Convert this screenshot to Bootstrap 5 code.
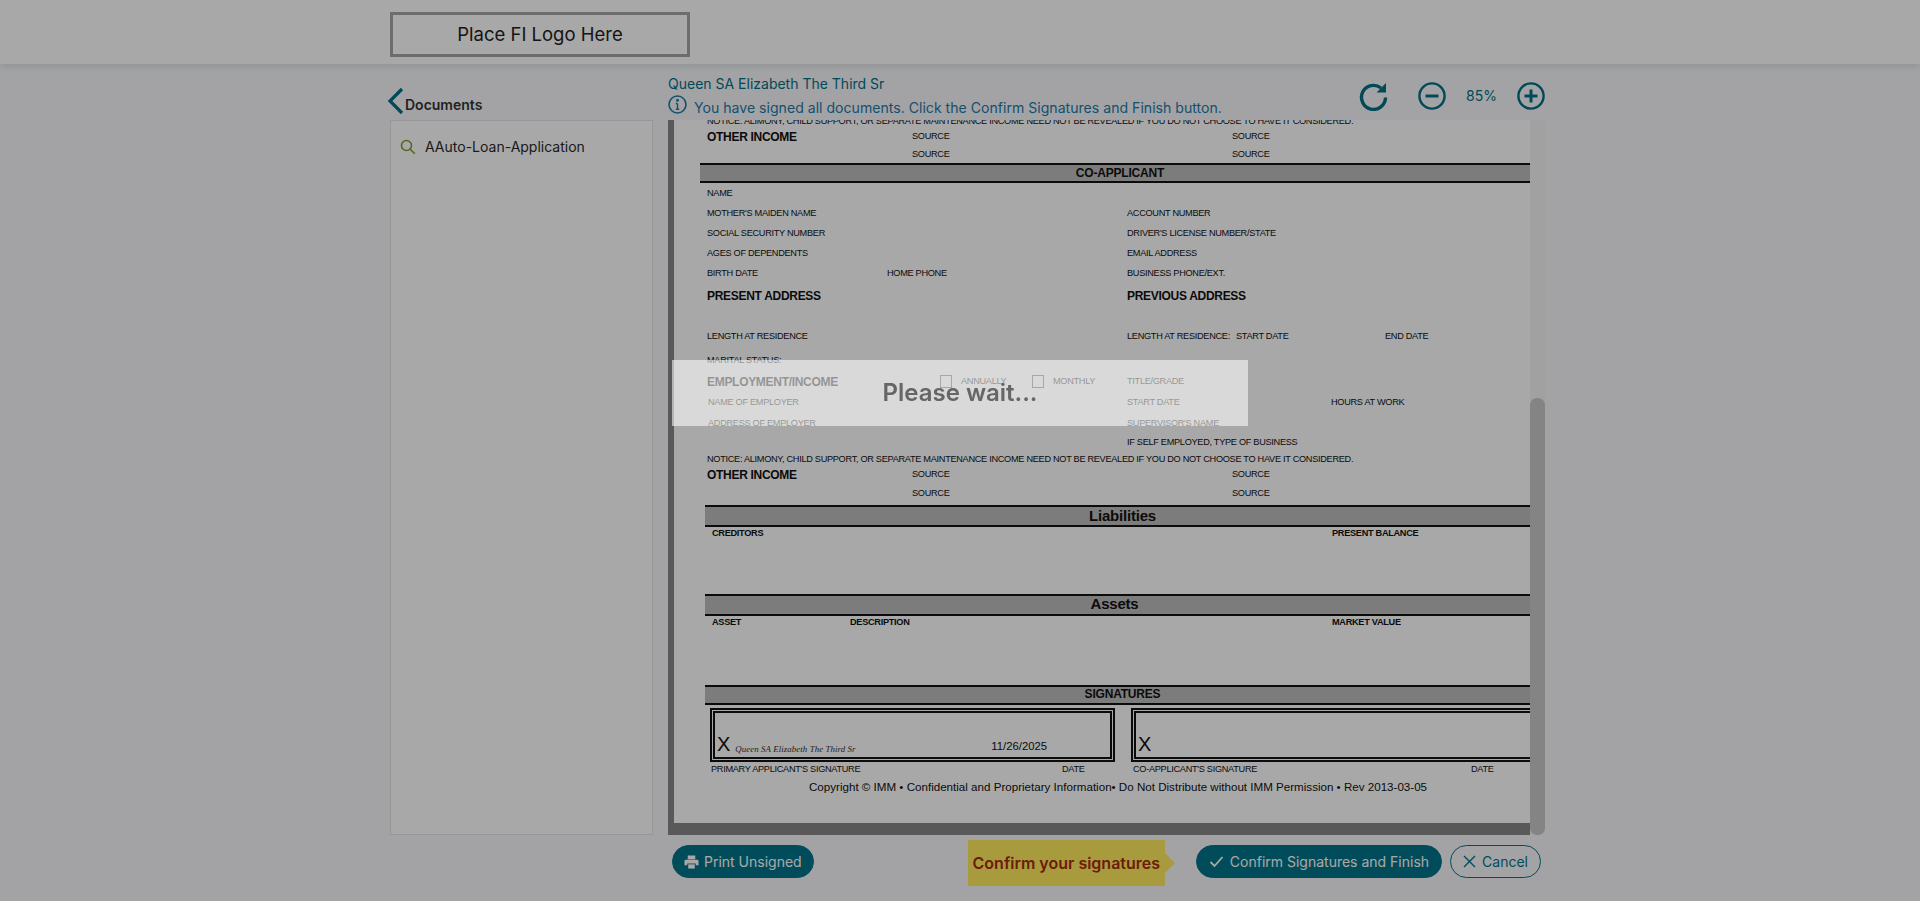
<!DOCTYPE html>
<html lang="en">
<head>
  <meta charset="UTF-8">
  <title>Sign Documents</title>
  <link href="https://cdn.jsdelivr.net/npm/bootstrap@5.3.0/dist/css/bootstrap.min.css" rel="stylesheet">
  <style>
    html, body { height: 100%; overflow: hidden; }
    body { background: #f7f8fb; font-family: Inter, "Liberation Sans", sans-serif; color: #222; }

    /* header */
    .top-bar { height: 64px; background: #fff; padding: 12px 0 0 390px; box-shadow: 0 2px 8px rgba(0,0,0,.12); }
    .logo-box { width: 300px; height: 45px; border: 3px solid #a6a6a6; font-size: 18.5px; font-weight: 400; color: #222; }

    /* main grid */
    .sign-grid { display: grid; grid-template-columns: 263px 877px; grid-template-rows: 56px 715px auto; column-gap: 15px; padding-left: 390px; }
    .docs-title { font-size: 14px; font-weight: 600; color: #333; padding-bottom: 5px; }
    .docs-title svg { margin-left: -5px; margin-right: -2px; }
    .docs-list { background: #fff; border: 1px solid #e4e4e4; padding: 15px 9px; }
    .docs-item { font-size: 14px; color: #2a2a2a; gap: 9px; }
    .who { font-size: 14px; color: #036f85; line-height: 18px; padding-top: 11px; }
    .sign-msg { font-size: 14.1px; color: #1f7aa8; line-height: 20px; gap: 7px; margin-top: 2px; }
    .sign-msg span { padding-top: 3px; }
    .zoom-tools { padding-top: 18px; gap: 30px; }
    .zoom-pct { font-size: 14px; color: #036f85; width: 41px; text-align: center; margin: 0 -15px; }
    .teal-ic { color: #036f85; }

    /* pdf viewer */
    .viewer { height: 715px; overflow: hidden; }
    .doc-pane { flex: 1 1 auto; min-width: 0; overflow: hidden; justify-content: flex-end; }
    .doc-page { flex-shrink: 0; background: #888; padding: 0 0 12px 6px; }
    .doc-paper { background: #fff; padding-bottom: 27px; font-family: "Liberation Sans", Arial, sans-serif; font-size: 9.2px; letter-spacing: -.3px; color: #111; white-space: nowrap; }
    .doc-row { display: flex; align-items: center; padding-left: 33px; padding-top: 1px; }
    .rh-12 { height: 12px; } .rh-13 { height: 13px; } .rh-15 { height: 15px; } .rh-17 { height: 17px; }
    .rh-18 { height: 18px; } .rh-20 { height: 20px; } .rh-21 { height: 21px; }
    .rh-22 { height: 22px; } .rh-24 { height: 24px; } .gap-4px { height: 4px; } .gap-19 { height: 19px; }
    .gap-55 { height: 55px; } .gap-57 { height: 57px; }
    .cw-71 { width: 71px; } .cw-74 { width: 74px; } .cw-109 { width: 109px; } .cw-138 { width: 138px; }
    .cw-149 { width: 149px; } .cw-180 { width: 180px; } .cw-204 { width: 204px; } .cw-205 { width: 205px; }
    .cw-233 { width: 233px; } .cw-240 { width: 240px; } .cw-320 { width: 320px; } .cw-338 { width: 338px; }
    .cw-351 { width: 351px; } .cw-419 { width: 419px; } .cw-420 { width: 420px; } .cw-482 { width: 482px; } .cw-620 { width: 620px; }
    .doc-h { font-size: 12px; font-weight: 700; letter-spacing: -.3px; }
    .doc-b { font-weight: 700; }
    .doc-band { width: 835px; margin-left: 31px; background: #bcbcbc; border-top: 2px solid #111; border-bottom: 2px solid #111; display: flex; align-items: center; justify-content: center; font-weight: 700; letter-spacing: -.2px; }
    .doc-band.wide { width: 840px; margin-left: 26px; }
    .band-sm { font-size: 12px; }
    .band-up { padding-bottom: 3px; }
    .band-lg { font-size: 15px; }
    .band-shift { padding: 0 16px 2px 0; }
    .pad-38 { padding-left: 38px; }
    .pad-34 { padding-left: 34px; }
    .doc-chk { width: 12px; height: 13px; border: 1.5px solid #555; margin-right: 9px; flex-shrink: 0; }
    .sig-row { display: flex; gap: 16px; padding-left: 36px; margin-top: 3px; }
    .sig-box { width: 405px; height: 54px; border: 5px double #111; display: flex; align-items: flex-end; padding: 0 0 1px 2px; flex-shrink: 0; }
    .sig-x { font-size: 20px; line-height: 24px; letter-spacing: 0; }
    .sig-name { font-family: "Liberation Serif", serif; font-style: italic; font-size: 8.8px; color: #333; width: 261px; padding-left: 5px; letter-spacing: .1px; }
    .sig-date { font-size: 11.3px; letter-spacing: 0; line-height: 17px; padding-bottom: 1px; }
    .doc-copy { font-size: 11.6px; letter-spacing: 0; height: 19px; align-items: center; display: flex; padding-left: 135px; }
    .doc-label-row { padding-left: 37px; }
    .scroll-track { width: 15px; flex-shrink: 0; background: #f4f4f4; }
    .scroll-thumb { height: 437px; background: #c9c9c9; border-radius: 7px; }

    /* footer buttons */
    .foot-bar { padding: 5px 4px 0 4px; }
    .pill { height: 33px; border-radius: 17px; font-size: 14px; line-height: 1; padding: 0 12px; gap: 6px; margin-top: 5px; }
    .pill-teal { background: #037489; border: 1px solid #037489; color: #fff; }
    .pill-print { padding: 0 11px; gap: 5px; }
    .pill-line { background: transparent; border: 1px solid #037489; color: #037489; margin-left: 8px; }
    .hint { height: 46px; width: 197px; background: #ffec5f; color: #a62b10; font-size: 16px; font-weight: 600; margin-right: 31px; position: relative; }
    .hint::after { content: ""; position: absolute; left: 100%; top: 13px; border-left: 10px solid #ffec5f; border-top: 10px solid transparent; border-bottom: 10px solid transparent; }

    /* blocking overlay */
    .block-dim { position: fixed; inset: 0; background: rgba(0,0,0,.34); z-index: 1000; }
    .block-msg { position: fixed; top: 360px; left: 672px; width: 576px; height: 66px; background: rgba(255,255,255,.56); color: #666; font-family: Inter, "Liberation Sans", sans-serif; font-size: 24px; font-weight: 600; z-index: 1001; }
  </style>
</head>
<body>
  <header class="top-bar">
    <div class="logo-box d-flex align-items-center justify-content-center">Place FI Logo Here</div>
  </header>

  <main class="sign-grid">
    <div class="docs-title d-flex align-items-end">
      <svg width="22" height="28" viewBox="0 0 22 28" fill="none" stroke="#036f85" stroke-width="3.2"><path d="M17 2 5 14l12 12"/></svg>
      <span>Documents</span>
    </div>
    <div class="d-flex justify-content-between">
      <div>
        <div class="who">Queen SA Elizabeth The Third Sr</div>
        <div class="sign-msg d-flex align-items-start">
          <svg width="19" height="19" viewBox="0 0 19 19" fill="none" stroke="#1f7aa8" stroke-width="1.6"><circle cx="9.500" cy="9.500" r="8.500"/><path d="M9.500 8.500v5.500M7.800 14.200h3.400M7.800 8.500h1.700" stroke-width="1.400"/><circle cx="9.500" cy="5.200" r=".7" fill="#1f7aa8"/></svg>
          <span>You have signed all documents. Click the Confirm Signatures and Finish button.</span>
        </div>
      </div>
      <div class="zoom-tools d-flex align-items-start teal-ic">
        <svg width="29" height="29" viewBox="0 0 29 29" fill="none" stroke="currentColor" stroke-width="3.4"><path d="M26.500 15.500A12 12 0 1 1 22 6"/><path d="M27 1v9.500h-9.500z" fill="currentColor" stroke="none"/></svg>
        <svg width="28" height="28" viewBox="0 0 28 28" fill="none" stroke="currentColor" stroke-width="2.400"><circle cx="14" cy="14" r="12.600"/><path d="M7.500 14h13" stroke-width="3"/></svg>
        <span class="zoom-pct lh-lg">85%</span>
        <svg width="28" height="28" viewBox="0 0 28 28" fill="none" stroke="currentColor" stroke-width="2.400"><circle cx="14" cy="14" r="12.600"/><path d="M7.500 14h13M14 7.500v13" stroke-width="3"/></svg>
      </div>
    </div>

    <aside class="docs-list">
      <div class="docs-item d-flex align-items-center">
        <svg width="16" height="16" viewBox="0 0 16 16" fill="none" stroke="#7ea02f" stroke-width="1.600"><circle cx="6.500" cy="6.500" r="5"/><path d="m10.200 10.200 4.600 4.600"/></svg>
        <span>AAuto-Loan-Application</span>
      </div>
    </aside>

    <section class="viewer d-flex">
      <div class="doc-pane d-flex flex-column">
        <div class="doc-page">
          <div class="doc-paper">
            <div class="doc-row rh-12">NOTICE: ALIMONY, CHILD SUPPORT, OR SEPARATE MAINTENANCE INCOME NEED NOT BE REVEALED IF YOU DO NOT CHOOSE TO HAVE IT CONSIDERED.</div>
            <div class="doc-row rh-18"><span class="cw-205 doc-h">OTHER INCOME</span><span class="cw-320">SOURCE</span><span>SOURCE</span></div>
            <div class="doc-row rh-18"><span class="cw-205"></span><span class="cw-320">SOURCE</span><span>SOURCE</span></div>
            <div class="doc-band wide band-sm rh-20">CO-APPLICANT</div>
            <div class="doc-row rh-20">NAME</div>
            <div class="doc-row rh-20"><span class="cw-420">MOTHER'S MAIDEN NAME</span><span>ACCOUNT NUMBER</span></div>
            <div class="doc-row rh-20"><span class="cw-420">SOCIAL SECURITY NUMBER</span><span>DRIVER'S LICENSE NUMBER/STATE</span></div>
            <div class="doc-row rh-20"><span class="cw-420">AGES OF DEPENDENTS</span><span>EMAIL ADDRESS</span></div>
            <div class="doc-row rh-20"><span class="cw-180">BIRTH DATE</span><span class="cw-240">HOME PHONE</span><span>BUSINESS PHONE/EXT.</span></div>
            <div class="doc-row rh-24 doc-h"><span class="cw-420">PRESENT ADDRESS</span><span>PREVIOUS ADDRESS</span></div>
            <div class="gap-19"></div>
            <div class="doc-row rh-20"><span class="cw-420">LENGTH AT RESIDENCE</span><span class="cw-109">LENGTH AT RESIDENCE:</span><span class="cw-149">START DATE</span><span>END DATE</span></div>
            <div class="gap-4px"></div>
            <div class="doc-row rh-20">MARITAL STATUS:</div>
            <div class="doc-row rh-22"><span class="cw-233 doc-h">EMPLOYMENT/INCOME</span><span class="doc-chk"></span><span class="cw-71">ANNUALLY</span><span class="doc-chk"></span><span class="cw-74">MONTHLY</span><span>TITLE/GRADE</span></div>
            <div class="doc-row rh-21 pad-34"><span class="cw-419">NAME OF EMPLOYER</span><span class="cw-204">START DATE</span><span>HOURS AT WORK</span></div>
            <div class="doc-row rh-20 pad-34"><span class="cw-419">ADDRESS OF EMPLOYER</span><span>SUPERVISOR'S NAME</span></div>
            <div class="doc-row rh-18"><span class="cw-420"></span><span>IF SELF EMPLOYED, TYPE OF BUSINESS</span></div>
            <div class="doc-row rh-17">NOTICE: ALIMONY, CHILD SUPPORT, OR SEPARATE MAINTENANCE INCOME NEED NOT BE REVEALED IF YOU DO NOT CHOOSE TO HAVE IT CONSIDERED.</div>
            <div class="doc-row rh-13"><span class="cw-205 doc-h">OTHER INCOME</span><span class="cw-320">SOURCE</span><span>SOURCE</span></div>
            <div class="doc-row rh-24"><span class="cw-205"></span><span class="cw-320">SOURCE</span><span>SOURCE</span></div>
            <div class="doc-band band-lg rh-22">Liabilities</div>
            <div class="doc-row rh-12 pad-38 doc-b"><span class="cw-620">CREDITORS</span><span>PRESENT BALANCE</span></div>
            <div class="gap-55"></div>
            <div class="doc-band band-lg band-shift rh-22">Assets</div>
            <div class="doc-row rh-12 pad-38 doc-b"><span class="cw-138">ASSET</span><span class="cw-482">DESCRIPTION</span><span>MARKET VALUE</span></div>
            <div class="gap-57"></div>
            <div class="doc-band band-sm band-up rh-20">SIGNATURES</div>
            <div class="sig-row">
              <div class="sig-box">
                <span class="sig-x">X</span>
                <span class="sig-name">Queen SA Elizabeth The Third Sr</span>
                <span class="sig-date">11/26/2025</span>
              </div>
              <div class="sig-box"><span class="sig-x">X</span></div>
            </div>
            <div class="doc-row rh-15 doc-label-row"><span class="cw-351">PRIMARY APPLICANT'S SIGNATURE</span><span class="cw-71">DATE</span><span class="cw-338">CO-APPLICANT'S SIGNATURE</span><span>DATE</span></div>
            <div class="doc-copy">Copyright © IMM • Confidential and Proprietary Information• Do Not Distribute without IMM Permission • Rev 2013-03-05</div>
          </div>
        </div>
      </div>
      <div class="scroll-track d-flex flex-column justify-content-end"><div class="scroll-thumb"></div></div>
    </section>

    <div></div>
    <footer class="foot-bar d-flex align-items-start">
      <button class="pill pill-teal pill-print d-flex align-items-center" type="button">
        <svg width="15" height="16" viewBox="0 0 16 16" fill="currentColor"><path d="M4 1h8v4H4zM2 5.500h12a1.500 1.500 0 0 1 1.500 1.500v4.500H12.500V9.500h-9v2H.5V7A1.500 1.500 0 0 1 2 5.500z"/><path d="M4.500 10.500h7V15h-7z"/></svg>
        Print Unsigned
      </button>
      <div class="hint d-flex align-items-center justify-content-center ms-auto">Confirm your signatures</div>
      <button class="pill pill-teal d-flex align-items-center" type="button">
        <svg width="15" height="13" viewBox="0 0 15 13" fill="none" stroke="currentColor" stroke-width="1.800"><path d="m1.500 7 4 4 8-9"/></svg>
        Confirm Signatures and Finish
      </button>
      <button class="pill pill-line d-flex align-items-center" type="button">
        <svg width="13" height="13" viewBox="0 0 13 13" fill="none" stroke="currentColor" stroke-width="1.400"><path d="m1 1 11 11M12 1 1 12"/></svg>
        Cancel
      </button>
    </footer>
  </main>

  <div class="block-dim"></div>
  <div class="block-msg d-flex align-items-center justify-content-center">Please wait...</div>

  <script src="https://cdn.jsdelivr.net/npm/bootstrap@5.3.0/dist/js/bootstrap.bundle.min.js"></script>
</body>
</html>
